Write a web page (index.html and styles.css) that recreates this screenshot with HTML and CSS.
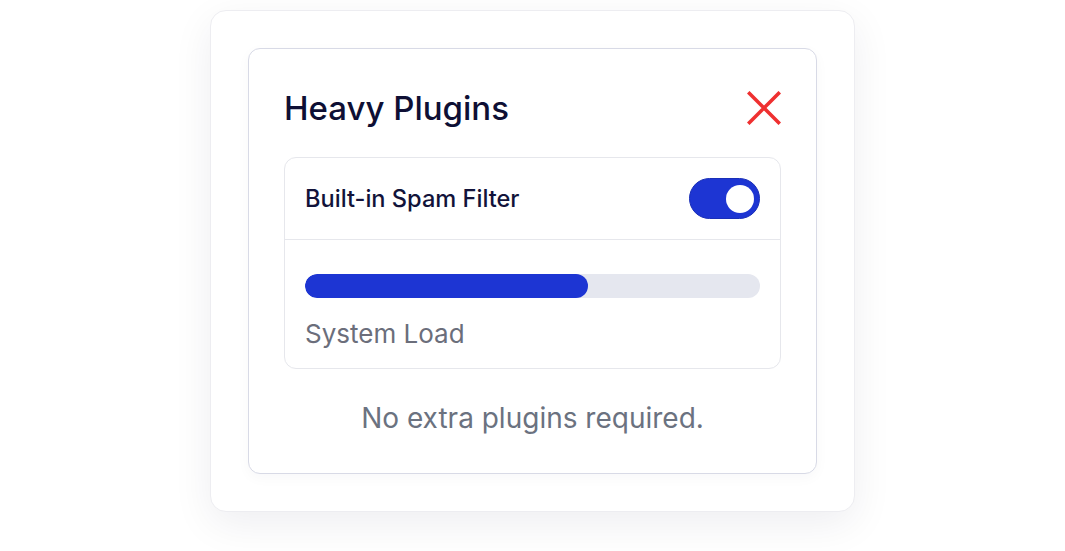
FILE: index.html
```html
<!DOCTYPE html>
<html lang="en">
<head>
<meta charset="utf-8">
<title>Heavy Plugins</title>
<link rel="stylesheet" href="styles.css">
</head>
<body>
<div class="page">
  <div class="frame">
    <div class="panel">
      <div class="panel-head">
        <h2 class="panel-title">Heavy Plugins</h2>
        <button class="close" aria-label="Close">
          <svg width="34" height="34" viewBox="0 0 34 34" fill="none">
            <path d="M2.5 2.5 L31.5 31.5 M31.5 2.5 L2.5 31.5" stroke="#ef3030" stroke-width="3.6" stroke-linecap="square"/>
          </svg>
        </button>
      </div>
      <div class="section">
        <div class="section-row">
          <span class="section-label">Built-in Spam Filter</span>
          <span class="toggle"><span class="knob"></span></span>
        </div>
        <div class="section-body">
          <div class="bar"><div class="bar-fill" style="width:62.2%"></div></div>
          <div class="bar-label">System Load</div>
        </div>
      </div>
      <p class="note">No extra plugins required.</p>
    </div>
  </div>
</div>
</body>
</html>
```

FILE: styles.css
```css
* { box-sizing: border-box; }
html, body { margin: 0; padding: 0; background: #ffffff; }
body { font-family: Inter, "Noto Sans", sans-serif; }

.page {
  display: flex;
  justify-content: center;
  padding: 10px 0 39px;
  min-height: 551px;
}

.frame {
  width: 645px;
  height: 502px;
  background: #ffffff;
  border: 1px solid #ededf1;
  border-radius: 16px;
  padding: 37px;
  box-shadow: 0 12px 40px rgba(20, 20, 60, 0.07);
}

.panel {
  height: 426px;
  border: 1px solid #d8dae6;
  border-radius: 12px;
  padding: 35px 35px 0;
  background: #fff;
  box-shadow: 0 4px 14px rgba(20, 20, 60, 0.03);
}

.panel-head {
  display: flex;
  align-items: center;
  justify-content: space-between;
  height: 48px;
  margin-bottom: 25px;
}

.panel-title {
  margin: 0;
  font-size: 33px;
  line-height: 40px;
  font-weight: 500;
  color: #0e0f34;
}

.close {
  border: 0;
  background: none;
  padding: 0;
  width: 34px;
  height: 34px;
  display: flex;
  cursor: pointer;
}

.section {
  border: 1px solid #e6e7ec;
  border-radius: 12px;
}

.section-row {
  display: flex;
  align-items: center;
  justify-content: space-between;
  padding: 20px;
  border-bottom: 1px solid #e6e7ec;
}

.section-label {
  font-size: 23.6px;
  font-weight: 500;
  color: #12133a;
}

.toggle {
  width: 71px;
  height: 41px;
  border-radius: 21px;
  background: #1d35d3;
  border: 1px solid #1a2fb8;
  display: flex;
  align-items: center;
  justify-content: flex-end;
  padding-right: 5px;
}

.knob {
  width: 28px;
  height: 28px;
  border-radius: 50%;
  background: #fff;
}

.section-body {
  padding: 34px 20px 19px;
  display: flex;
  flex-direction: column;
  gap: 21px;
}

.bar {
  height: 24px;
  border-radius: 12px;
  background: #e5e7ef;
  overflow: hidden;
}

.bar-fill {
  height: 100%;
  border-radius: 12px;
  background: #1d35d3;
}

.bar-label {
  font-size: 26px;
  line-height: 30px;
  color: #6b6e7b;
}

.note {
  margin: 32px 0 0;
  text-align: center;
  font-size: 28px;
  color: #6b7280;
}
```
